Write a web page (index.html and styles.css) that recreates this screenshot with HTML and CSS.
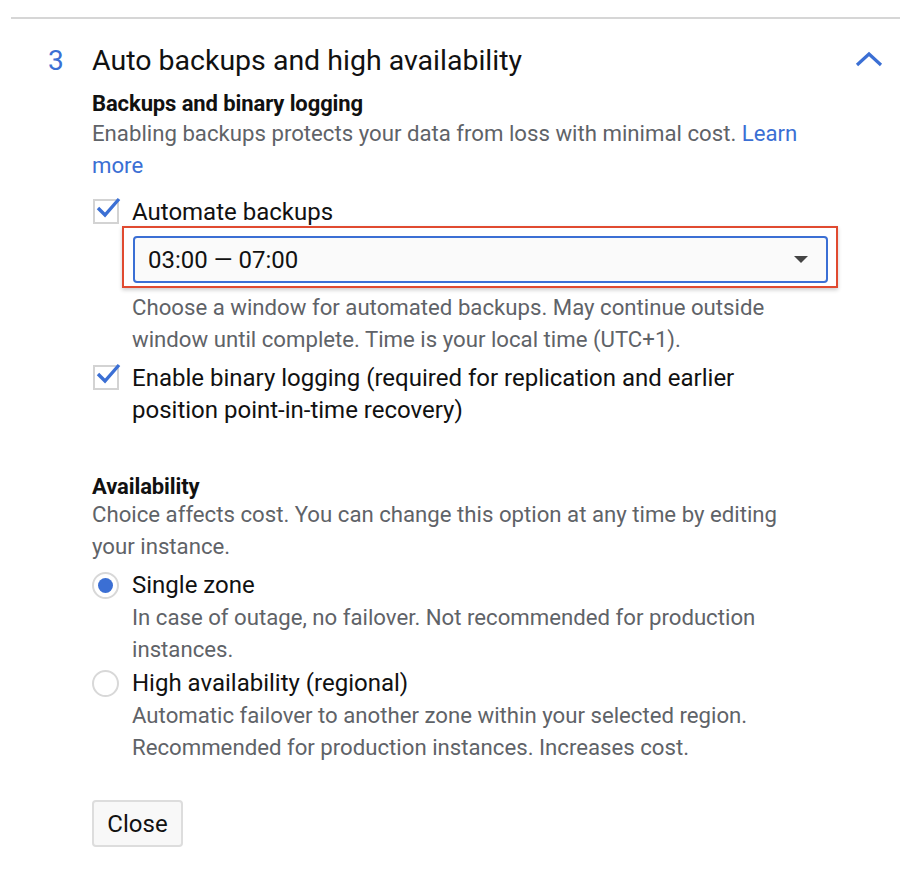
FILE: index.html
```html
<!DOCTYPE html>
<html>
<head>
<meta charset="utf-8">
<link rel="stylesheet" href="styles.css">
</head>
<body>
<div class="panel">
  <hr class="divider">
  <div class="header">
    <span class="step">3</span>
    <h1 class="title">Auto backups and high availability</h1>
    <svg class="chevron" width="28" height="16" viewBox="0 0 28 16"><path d="M2 14 L14 3 L26 14" fill="none" stroke="#3b6fd4" stroke-width="3.2"/></svg>
  </div>
  <div class="content">
    <h2 class="subhead">Backups and binary logging</h2>
    <p class="desc">Enabling backups protects your data from loss with minimal cost. <a class="link">Learn more</a></p>

    <div class="option check-option first-check">
      <span class="checkbox"><svg width="26" height="22" viewBox="0 0 26 22"><path d="M3 12 L10 19 L24 3" fill="none" stroke="#3b6fd4" stroke-width="3.4"/></svg></span>
      <span class="label">Automate backups</span>
    </div>
    <div class="select-wrap">
      <div class="select">
        <span class="select-value">03:00 — 07:00</span>
        <span class="caret"></span>
      </div>
    </div>
    <p class="help select-help">Choose a window for automated backups. May continue outside window until complete. Time is your local time (UTC+1).</p>

    <div class="option check-option second-check">
      <span class="checkbox"><svg width="26" height="22" viewBox="0 0 26 22"><path d="M3 12 L10 19 L24 3" fill="none" stroke="#3b6fd4" stroke-width="3.4"/></svg></span>
      <span class="label">Enable binary logging (required for replication and earlier position point-in-time recovery)</span>
    </div>

    <h2 class="subhead avail">Availability</h2>
    <p class="desc avail-desc">Choice affects cost. You can change this option at any time by editing your instance.</p>

    <div class="option radio-option first-radio">
      <span class="radio checked"></span>
      <div class="radio-text">
        <div class="label">Single zone</div>
        <p class="help">In case of outage, no failover. Not recommended for production instances.</p>
      </div>
    </div>
    <div class="option radio-option second-radio">
      <span class="radio"></span>
      <div class="radio-text">
        <div class="label">High availability (regional)</div>
        <p class="help">Automatic failover to another zone within your selected region. Recommended for production instances. Increases cost.</p>
      </div>
    </div>

    <button class="close-btn">Close</button>
  </div>
</div>
</body>
</html>
```
FILE: styles.css
```css
html, body {
  margin: 0;
  padding: 0;
  background: #fff;
}
body {
  font-family: Roboto, "Liberation Sans", sans-serif;
  color: #202124;
}
.panel {
  padding: 17px 14px 0 11px;
}
.divider {
  border: 0;
  border-top: 2px solid #d6d6d6;
  margin: 0;
}
.header {
  display: flex;
  align-items: center;
  margin-top: 23px;
  height: 36px;
}
.step {
  width: 81px;
  padding-left: 37px;
  box-sizing: border-box;
  color: #3b6fd4;
  font-size: 28px;
}
.title {
  flex: 1;
  margin: 0;
  font-size: 28.5px;
  font-weight: 400;
  color: #111;
}
.chevron {
  margin-right: 17px;
  margin-top: -3px;
}
.content {
  padding-left: 81px;
}
.subhead {
  margin: 13px 0 0;
  font-size: 22px;
  font-weight: 700;
  line-height: 26px;
  letter-spacing: -0.1px;
  color: #111;
}
.subhead.avail {
  margin-top: 48px;
}
.desc, .help {
  margin: 0;
  font-size: 22.2px;
  line-height: 32px;
  color: #5f6368;
}
.desc {
  max-width: 725px;
}
.avail-desc {
  margin-top: -2px;
}
.help {
  max-width: 670px;
}
.link {
  color: #3b6fd4;
  text-decoration: none;
}
.option {
  display: flex;
  align-items: flex-start;
}
.first-check {
  margin-top: 15px;
}
.second-check {
  margin-top: 7px;
}
.checkbox {
  width: 26px;
  height: 25px;
  border: 2px solid #d3d3d3;
  box-sizing: border-box;
  flex: none;
  margin: 3px 13px 0 1px;
  position: relative;
}
.checkbox svg {
  position: absolute;
  left: 0;
  top: -5px;
}
.label {
  font-size: 24px;
  line-height: 32px;
  color: #111;
}
.check-option .label {
  max-width: 640px;
}
.select-wrap {
  margin: -2px 0 0 30px;
  width: 716px;
  border: 2px solid #e04a30;
  box-shadow: 0 2px 4px rgba(0,0,0,0.2);
  box-sizing: border-box;
  padding: 8px 8px 3px 9px;
}
.select {
  height: 47px;
  border: 2px solid #3b6fd4;
  border-radius: 4px;
  background: #fafafa;
  box-sizing: border-box;
  display: flex;
  align-items: center;
  justify-content: space-between;
  padding: 0 18px 0 13px;
}
.select-value {
  font-size: 24px;
  color: #111;
}
.caret {
  width: 0;
  height: 0;
  border-left: 7px solid transparent;
  border-right: 7px solid transparent;
  border-top: 7px solid #444;
}
.select-help {
  margin-top: 3px;
  padding-left: 40px;
}
.first-radio {
  margin-top: 7px;
}
.second-radio {
  margin-top: 2px;
}
.radio {
  width: 27px;
  height: 27px;
  border: 2px solid #d8d8d8;
  border-radius: 50%;
  box-sizing: border-box;
  flex: none;
  margin: 3px 13px 0 0;
  position: relative;
  background: #fff;
}
.radio.checked::after {
  content: "";
  position: absolute;
  left: 4px;
  top: 4px;
  width: 15px;
  height: 15px;
  border-radius: 50%;
  background: #3b6fd4;
}
.close-btn {
  display: block;
  margin-top: 37px;
  height: 47px;
  width: 91px;
  padding: 0;
  font-family: Roboto, "Liberation Sans", sans-serif;
  font-size: 24px;
  color: #111;
  background: #f8f8f8;
  border: 2px solid #ddd;
  border-radius: 4px;
}
```
